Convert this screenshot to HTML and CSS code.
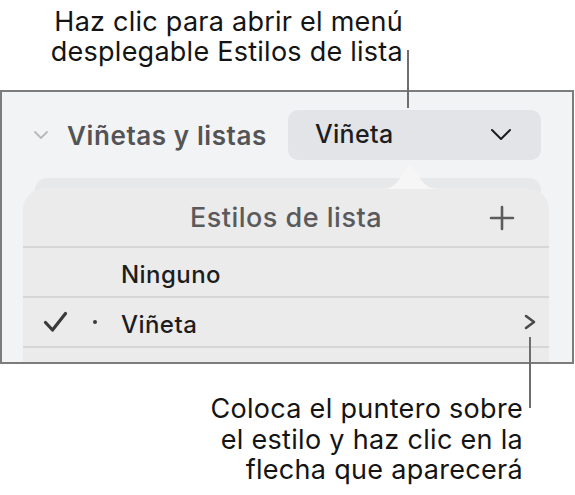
FILE: index.html
```html
<!DOCTYPE html>
<html lang="es">
<head>
<meta charset="utf-8">
<link rel="stylesheet" href="styles.css">
</head>
<body>
<div class="page">
  <div class="callout-top">Haz clic para abrir el menú<br>desplegable Estilos de lista</div>
  <div class="leader leader-top"></div>

  <div class="panel">
    <div class="header">
      <svg class="disclosure" width="16" height="10" viewBox="0 0 16 10"><path d="M2 2 L8 8 L14 2" fill="none" stroke="#b9b9bc" stroke-width="1.8" stroke-linecap="round" stroke-linejoin="round"/></svg>
      <span class="title">Viñetas y listas</span>
      <div class="popup">
        <span class="popup-label">Viñeta</span>
        <svg width="22" height="13" viewBox="0 0 22 13"><path d="M2 2 L11 11 L20 2" fill="none" stroke="#1d1d1f" stroke-width="2" stroke-linecap="round" stroke-linejoin="round"/></svg>
      </div>
    </div>
    <div class="backcard"></div>
    <div class="popover">
      <svg class="beak" width="60" height="24" viewBox="0 0 60 24"><path d="M0 24 C12 24 16 20 22 10 C26 3 28 1 30 1 C32 1 34 3 38 10 C44 20 48 24 60 24 Z" fill="#f6f6f7"/></svg>
      <div class="pop-head">
        <span class="pop-title">Estilos de lista</span>
        <svg class="plus" width="26" height="26" viewBox="0 0 26 26"><path d="M13 2 V24 M2 13 H24" stroke="#5c5c5e" stroke-width="2.6" stroke-linecap="round"/></svg>
      </div>
      <div class="row">
        <span class="check"></span>
        <span class="bullet"></span>
        <span class="label">Ninguno</span>
      </div>
      <div class="row">
        <span class="check"><svg width="25" height="22" viewBox="0 0 25 22"><path d="M2.5 11.5 L9.5 19 L22.5 2.5" fill="none" stroke="#3a3a3c" stroke-width="3.2" stroke-linecap="round" stroke-linejoin="round"/></svg></span>
        <span class="bullet"><span class="dot"></span></span>
        <span class="label">Viñeta</span>
        <svg class="more" width="14" height="16" viewBox="0 0 14 16"><path d="M3 2 L11 8 L3 14" fill="none" stroke="#4a4a4c" stroke-width="2.6" stroke-linecap="round" stroke-linejoin="round"/></svg>
      </div>
      <div class="row"></div>
    </div>
  </div>

  <div class="leader leader-bottom"></div>
  <div class="callout-bottom">Coloca el puntero sobre<br>el estilo y haz clic en la<br>flecha que aparecerá</div>
</div>
</body>
</html>
```

FILE: styles.css
```css
* { box-sizing: border-box; }
html, body { margin: 0; padding: 0; background: #ffffff; }
body {
  width: 575px;
  height: 495px;
  overflow: hidden;
  font-family: Inter, Roboto, "Liberation Sans", sans-serif;
}
.page {
  position: relative;
  width: 575px;
  height: 495px;
}
.callout-top {
  width: 403px;
  height: 90px;
  padding-top: 7px;
  text-align: right;
  font-size: 27px;
  line-height: 30px;
  letter-spacing: 0.25px;
  color: #141414;
}
.leader {
  position: absolute;
  width: 2px;
  background: #6e6e6e;
}
.leader-top { left: 407px; top: 50px; height: 58px; z-index: 3; }
.leader-bottom { left: 529px; top: 337px; height: 71px; z-index: 3; }

.panel {
  position: relative;
  width: 574px;
  height: 274px;
  border: 2px solid #7c7c7c;
  background: #f2f3f5;
  overflow: hidden;
}
.header {
  display: flex;
  align-items: center;
  height: 50px;
  margin-top: 18px;
  padding-left: 31px;
}
.disclosure { flex: none; }
.title {
  margin-left: 18px;
  font-size: 26px;
  font-weight: 600;
  letter-spacing: 0.6px;
  color: #545456;
}
.popup {
  margin-left: auto;
  margin-right: 31px;
  width: 253px;
  height: 50px;
  border-radius: 10px;
  background: #e3e4e7;
  display: flex;
  align-items: center;
  justify-content: space-between;
  padding: 0 29px 2px 27px;
}
.popup-label {
  font-size: 25px;
  font-weight: 500;
  letter-spacing: 0.3px;
  color: #1d1d1f;
}
.backcard {
  margin: 18px 0 0 33px;
  width: 506px;
  height: 200px;
  border-radius: 12px;
  background: #e7e8ea;
}
.popover {
  position: absolute;
  left: 21px;
  top: 96px;
  width: 526px;
  height: 220px;
  border-radius: 22px 22px 0 0;
  background: #ebebeb;
}
.beak {
  position: absolute;
  left: 357px;
  top: -23px;
}
.pop-head {
  position: relative;
  height: 60px;
  display: flex;
  align-items: center;
  justify-content: center;
  border-bottom: 2px solid #d6d6d6;
}
.pop-title {
  font-size: 27px;
  font-weight: 500;
  letter-spacing: 0.5px;
  color: #5a5a5c;
}
.plus {
  position: absolute;
  right: 34px;
  top: 17px;
}
.row {
  height: 50px;
  display: flex;
  align-items: center;
  border-bottom: 2px solid #d6d6d6;
  padding-left: 20px;
}
.check {
  width: 45px;
  display: flex;
  align-items: center;
}
.bullet {
  width: 33px;
  display: flex;
  align-items: center;
  padding-left: 5px;
}
.dot {
  width: 4px;
  height: 4px;
  border-radius: 50%;
  background: #3a3a3c;
}
.label {
  padding-top: 4px;
  font-size: 24px;
  font-weight: 500;
  letter-spacing: 0.45px;
  color: #1d1d1f;
}
.more {
  margin-left: auto;
  margin-right: 12px;
}
.callout-bottom {
  position: absolute;
  left: 0;
  top: 394px;
  width: 523px;
  text-align: right;
  font-size: 27px;
  line-height: 30.5px;
  letter-spacing: 0.3px;
  color: #141414;
}
```
